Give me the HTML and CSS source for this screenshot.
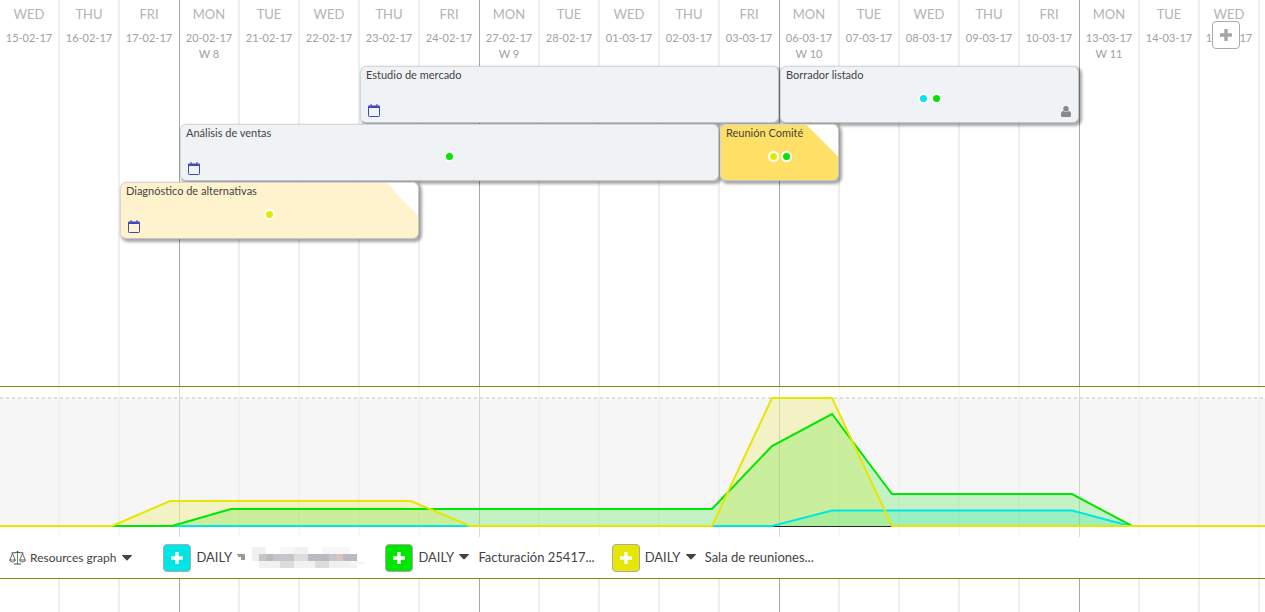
FILE: index.html
```html
<!DOCTYPE html>
<html lang="es">
<head>
<meta charset="utf-8">
<title>Planificación</title>
<link rel="stylesheet" href="styles.css">
</head>
<body>
<svg class="sprite" aria-hidden="true">
  <symbol id="calendar" viewBox="0 0 12 13">
    <path d="M.5 3.500h11v8.200q0 .8-.8.800H1.300q-.8 0-.8-.8z" fill="none" stroke="#4046b4"/>
    <path d="M0 4V2.500Q0 1.500 1 1.500h10q1 0 1 1V4z" fill="#4046b4"/>
    <path d="M2 .5h2v2H2zM8 .5h2v2H8z" fill="#4046b4"/>
    <path d="M2.800 1v1.500M9.200 1v1.500" stroke="#b9bce4" stroke-width=".6"/>
  </symbol>
  <symbol id="person" viewBox="0 0 10 11">
    <circle cx="5" cy="2.700" r="2.700"/>
    <path d="M0 9.500V8q0-2.800 2.400-3Q5 7 7.600 5 10 5.200 10 8v1.500Q10 11 8.500 11h-7Q0 11 0 9.500z"/>
  </symbol>
  <symbol id="plus" viewBox="0 0 14 14"><path d="M5.300 1h3.400v4.300H13v3.400H8.700V13H5.300V8.700H1V5.300h4.300z"/></symbol>
  <symbol id="caret" viewBox="0 0 10 6"><path d="M.4 0h9.200q.6.300.2.800L5.500 5.200q-.5.400-1 0L.2.800Q-.2.300.4 0z"/></symbol>
</svg>
<main class="planner">
  <div class="calendar">
    <div class="day"><b>WED</b><span>15-02-17</span></div>
    <div class="day"><b>THU</b><span>16-02-17</span></div>
    <div class="day week-end"><b>FRI</b><span>17-02-17</span></div>
    <div class="day"><b>MON</b><span>20-02-17</span><span>W 8</span></div>
    <div class="day"><b>TUE</b><span>21-02-17</span></div>
    <div class="day"><b>WED</b><span>22-02-17</span></div>
    <div class="day"><b>THU</b><span>23-02-17</span></div>
    <div class="day week-end"><b>FRI</b><span>24-02-17</span></div>
    <div class="day"><b>MON</b><span>27-02-17</span><span>W 9</span></div>
    <div class="day"><b>TUE</b><span>28-02-17</span></div>
    <div class="day"><b>WED</b><span>01-03-17</span></div>
    <div class="day"><b>THU</b><span>02-03-17</span></div>
    <div class="day week-end"><b>FRI</b><span>03-03-17</span></div>
    <div class="day"><b>MON</b><span>06-03-17</span><span>W 10</span></div>
    <div class="day"><b>TUE</b><span>07-03-17</span></div>
    <div class="day"><b>WED</b><span>08-03-17</span></div>
    <div class="day"><b>THU</b><span>09-03-17</span></div>
    <div class="day week-end"><b>FRI</b><span>10-03-17</span></div>
    <div class="day"><b>MON</b><span>13-03-17</span><span>W 11</span></div>
    <div class="day"><b>TUE</b><span>14-03-17</span></div>
    <div class="day"><b>WED</b><span>15-03-17</span></div>
    <div class="day"></div>
  </div>
  <div class="content">
    <section class="board">
      <article class="task market">
        <h2>Estudio de mercado</h2>
        <svg class="cal"><use href="#calendar"/></svg>
      </article>
      <article class="task draft">
        <h2>Borrador listado</h2>
        <div class="dots"><i class="dot cyan"></i><i class="dot green"></i></div>
        <svg class="person"><use href="#person"/></svg>
      </article>
      <article class="task sales">
        <h2>Análisis de ventas</h2>
        <div class="dots"><i class="dot green"></i></div>
        <svg class="cal"><use href="#calendar"/></svg>
      </article>
      <article class="task meeting folded">
        <h2>Reunión Comité</h2>
        <div class="dots"><i class="dot yellow"></i><i class="dot green"></i></div>
      </article>
      <article class="task diagnosis folded">
        <h2>Diagnóstico de alternativas</h2>
        <div class="dots"><i class="dot yellow"></i></div>
        <svg class="cal"><use href="#calendar"/></svg>
      </article>
    </section>
    <section class="resources">
      <svg class="chart" width="1320" height="150" viewBox="0 0 1320 150" role="img" aria-label="Resources graph">
        <rect y="11" width="1320" height="129" fill="#000" fill-opacity=".036"/>
        <path d="M0 11H1320" stroke="#ddd" stroke-width="2" stroke-dasharray="3 3"/>
        <path d="M0 139.500H1320" stroke="#222"/>
        <g fill-opacity=".2">
          <path d="M772 139L832 123.500H1072L1130 139z" fill="#00e6e6"/>
          <path d="M172 139L231 122H712L772 59 832 27 892 107H1072L1132 139z" fill="#00e600"/>
          <path d="M112 139L170 114H411L470 139H712L772 11H832L892 139z" fill="#e6e600"/>
        </g>
        <g fill="none" stroke-width="2">
          <path d="M172 139H772L832 123.500H1072L1130 139" stroke="#00e6e6"/>
          <path d="M0 139H172L231 122H712L772 59 832 27 892 107H1072L1132 139H1320" stroke="#00e600"/>
          <path d="M0 139H112L170 114H411L470 139H712L772 11H832L892 139H1320" stroke="#e6e600"/>
        </g>
      </svg>
      <div class="legend">
        <button class="graph-menu" type="button">
          <svg class="scales" viewBox="0 0 17 15" fill="none" stroke="#444">
            <path d="M8.500 1v12.500M2.500 3Q6 3 8.500 2q2.500 1 6 1M5 14h7"/>
            <path d="M3.500 3.500.8 10M3.500 3.500 6.200 10M13.500 3.500 10.800 10M13.500 3.500 16.200 10" stroke-width=".8"/>
            <path d="M.5 10h6Q6 12 3.500 12T.5 10zM10.500 10h6q-.5 2-3 2t-3-2z" stroke-width=".8"/>
            <path d="M8.500 3v10" stroke="#4d9a60"/>
          </svg>
          <span>Resources graph</span>
          <svg class="caret"><use href="#caret"/></svg>
        </button>
        <div class="resource">
          <button class="add cyan" type="button" aria-label="Añadir recurso"><svg><use href="#plus"/></svg></button>
          <label class="period"><select aria-label="Periodo"><option>DAILY</option></select>
            <svg class="caret muted" viewBox="0 0 10 6"><path d="M0 0h8v6H4V3H1V1H0z"/></svg></label>
          <svg class="masked" viewBox="0 0 112 24" shape-rendering="crispEdges" role="img" aria-label="Nombre oculto">
            <path fill="#f1f1f1" d="M0 3h14v7H0zM42 3h14v7H42zM7 17h98v7H7z"/>
            <path fill="#f7f7f8" d="M28 3h14v7H28zM70 3h28v7H70zM98 17h14v4H98z"/>
            <path fill="#f6eee8" d="M0 10h7v7H0z"/>
            <path fill="#c5c6ca" d="M7 10h98v7H7z"/>
            <path fill="#b9bbc0" d="M14 10h7v7h-7zM56 10h21v7H56zM91 10h14v7H91z"/>
            <path fill="#dddcdc" d="M42 10h14v7H42zM28 17h14v7H28zM63 17h14v7H63z"/>
            <path fill="#d5c8be" d="M84 10h7v7h-7z"/>
          </svg>
        </div>
        <div class="resource">
          <button class="add green" type="button" aria-label="Añadir recurso"><svg><use href="#plus"/></svg></button>
          <label class="period"><select aria-label="Periodo"><option>DAILY</option></select>
            <svg class="caret"><use href="#caret"/></svg></label>
          <span>Facturación 25417...</span>
        </div>
        <div class="resource">
          <button class="add yellow" type="button" aria-label="Añadir recurso"><svg><use href="#plus"/></svg></button>
          <label class="period"><select aria-label="Periodo"><option>DAILY</option></select>
            <svg class="caret"><use href="#caret"/></svg></label>
          <span>Sala de reuniones...</span>
        </div>
      </div>
    </section>
  </div>
  <button class="new-task" type="button" aria-label="Añadir tarea"><svg><use href="#plus"/></svg></button>
</main>
</body>
</html>
```
FILE: styles.css
```css
* { box-sizing: border-box; }

body {
  margin: 0;
  background: #fff;
  color: #444;
  font-family: Lato, "Liberation Sans", sans-serif;
}

button, select {
  margin: 0;
  padding: 0;
  border: 0;
  background: none;
  color: inherit;
  font: inherit;
}

.sprite { position: absolute; width: 0; height: 0; }

.planner {
  position: relative;
  display: grid;
  grid-template-columns: minmax(0, 1fr);
  min-height: 100vh;
  overflow: hidden;
}

.calendar, .content { grid-area: 1 / 1; }

.calendar {
  display: grid;
  grid-auto-flow: column;
  grid-auto-columns: 60px;
  overflow: hidden;
}

.day {
  display: flex;
  flex-direction: column;
  padding-top: 6px;
  border-right: 2px solid #eee;
  color: #a0a0a0;
  font-size: 11px;
  line-height: 16px;
  text-align: center;
}

.day b {
  margin-bottom: 8px;
  color: #b4b4b4;
  font-size: 13px;
  font-weight: 400;
}

.day.week-end {
  padding-right: 1px;
  border-right: 1px solid #a6a6a6;
}

.content { z-index: 1; }

.board {
  display: grid;
  grid-template-columns: repeat(22, 60px);
  grid-auto-rows: 58px;
  min-height: 386px;
  padding-top: 66px;
}

.task {
  display: grid;
  grid-template-rows: 16px 1fr;
  margin: 0 1px 1px 0;
  padding: 0 5px;
  border: 1px solid #d4d6d8;
  border-right-color: #c4c6c8;
  border-bottom-color: #c4c6c8;
  border-radius: 6px;
  background-color: #eff3f6;
  box-shadow: 2px 2px 3px 1px rgba(0, 0, 0, .35);
}

.task h2 {
  margin: 0;
  font-size: 11px;
  font-weight: 400;
  line-height: 16px;
  white-space: nowrap;
}

.market { grid-area: 1 / 7 / 2 / 14; }
.draft { grid-area: 1 / 14 / 2 / 19; }
.sales { grid-area: 2 / 4 / 3 / 13; }
.meeting { grid-area: 2 / 13 / 3 / 15; background-color: #ffe066; }
.diagnosis { grid-area: 3 / 3 / 4 / 8; background-color: #fef3cc; }

.folded {
  background-image: linear-gradient(to bottom left, #fff 50%, transparent 50%);
  background-repeat: no-repeat;
  background-position: right top;
  background-size: 32px 32px;
}

.dots {
  grid-area: 2 / 1;
  display: flex;
  justify-content: center;
  gap: 2px;
  padding-top: 10px;
}

.dot {
  width: 11px;
  height: 11px;
  border: 2px solid #fff;
  border-radius: 50%;
}

.cyan { background-color: #00e6e6; }
.green { background-color: #00e600; }
.yellow { background-color: #e6e600; }

.cal, .person { grid-area: 2 / 1; align-self: end; margin-bottom: 5px; }
.cal { width: 12px; height: 13px; margin-left: 2px; }
.person { width: 10px; height: 11px; justify-self: end; margin-right: 2px; fill: #888; }

.resources {
  border: solid #739600;
  border-width: 1px 0;
  background: rgba(255, 255, 255, .6);
  overflow: hidden;
}

.chart { display: block; }

.legend {
  display: flex;
  align-items: center;
  height: 41px;
  margin-right: 70px;
  padding-left: 9px;
  background: #fff;
  font-size: 13px;
  white-space: nowrap;
}

.graph-menu {
  display: flex;
  align-items: center;
  gap: 4px;
  margin-right: 31px;
  font-size: 12px;
}

.scales { width: 17px; height: 15px; }
.caret { width: 10px; height: 6px; fill: #444; }
.graph-menu .caret { margin-left: 2px; }
.caret.muted { fill: #999; }

.resource {
  display: flex;
  align-items: center;
  gap: 9px;
  margin-right: 17px;
}

.add, .new-task {
  display: grid;
  place-items: center;
  width: 28px;
  height: 28px;
  border: 1px solid #aaa;
  border-radius: 4px;
}

.add { margin-right: -4px; fill: #fff; }
.add svg, .new-task svg { width: 14px; height: 14px; }

.period {
  display: grid;
  align-items: center;
  width: 51px;
  padding-bottom: 2px;
}

.period select { grid-area: 1 / 1; width: 100%; appearance: none; }
.period .caret { grid-area: 1 / 1; justify-self: end; pointer-events: none; }
.resource > span { padding-bottom: 2px; }

.masked { width: 112px; height: 24px; margin: 0 4px 4px -4px; }

.new-task {
  position: absolute;
  z-index: 2;
  top: 21px;
  right: 25px;
  background: #fff;
  fill: #a6a6a6;
}
```
